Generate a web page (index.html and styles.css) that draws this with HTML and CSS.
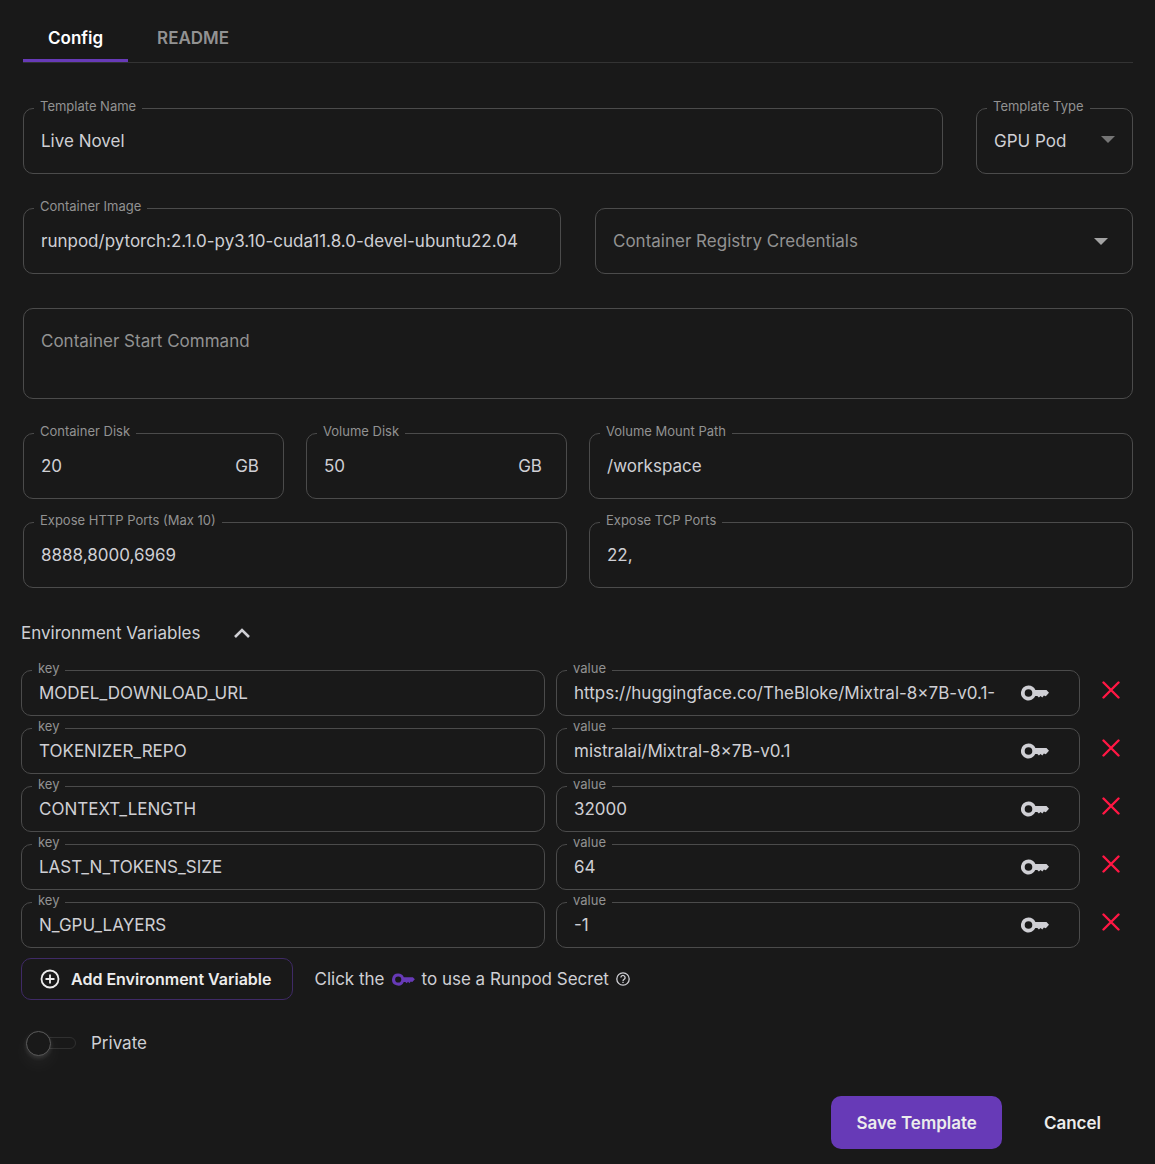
FILE: index.html
```html
<!DOCTYPE html>
<html lang="en">
<head>
<meta charset="utf-8">
<meta name="viewport" content="width=device-width, initial-scale=1">
<title>Template</title>
<link rel="stylesheet" href="styles.css">
</head>
<body>
<svg class="defs" aria-hidden="true">
  <symbol id="key" viewBox="0 0 28 16">
    <path fill="currentColor" fill-rule="evenodd" d="M7.500 0.500a7.500 7.500 0 0 1 6.900 4.600H25.500L28 7.800 24.800 11.200 22.900 10.600 21.300 12.500 19.600 10.900 17.900 12.500 16.300 11H14.300A7.500 7.500 0 1 1 7.500 0.500ZM7.500 4.200a3.800 3.800 0 1 0 0 7.600 3.800 3.800 0 0 0 0-7.600Z"/>
  </symbol>
  <symbol id="cross" viewBox="0 0 18 18">
    <path fill="none" stroke="currentColor" stroke-width="2.400" stroke-linecap="round" d="M1.500 1.500l15 15M16.500 1.500l-15 15"/>
  </symbol>
</svg>
<form class="page">
  <nav class="tabs">
    <button type="button" class="tab tab-active">Config</button>
    <button type="button" class="tab">README</button>
  </nav>

  <div class="rows">
    <div class="row row-name">
      <div class="field">
        <label class="label" for="name">Template Name</label>
        <input class="input" id="name" value="Live Novel">
      </div>
      <div class="field">
        <label class="label" for="type">Template Type</label>
        <select class="input" id="type"><option>GPU Pod</option></select>
        <svg class="arrow arrow-dim" viewBox="0 0 14 7"><path fill="currentColor" d="M0 0h14L7 7z"/></svg>
      </div>
    </div>
    <div class="row row-half">
      <div class="field">
        <label class="label" for="image">Container Image</label>
        <input class="input" id="image" value="runpod/pytorch:2.1.0-py3.10-cuda11.8.0-devel-ubuntu22.04">
      </div>
      <div class="field field-registry">
        <select class="input empty" aria-label="Container Registry Credentials"><option>Container Registry Credentials</option></select>
        <svg class="arrow" viewBox="0 0 14 7"><path fill="currentColor" d="M0 0h14L7 7z"/></svg>
      </div>
    </div>
    <div class="field field-tall">
      <textarea class="input" rows="1" aria-label="Container Start Command" placeholder="Container Start Command"></textarea>
    </div>
    <div class="quarters">
      <div class="field">
        <label class="label" for="cdisk">Container Disk</label>
        <input class="input" id="cdisk" value="20"><span class="unit">GB</span>
      </div>
      <div class="field">
        <label class="label" for="vdisk">Volume Disk</label>
        <input class="input" id="vdisk" value="50"><span class="unit">GB</span>
      </div>
      <div class="field wide">
        <label class="label" for="mount">Volume Mount Path</label>
        <input class="input" id="mount" value="/workspace">
      </div>
      <div class="field wide">
        <label class="label" for="http">Expose HTTP Ports (Max 10)</label>
        <input class="input" id="http" value="8888,8000,6969">
      </div>
      <div class="field wide">
        <label class="label" for="tcp">Expose TCP Ports</label>
        <input class="input" id="tcp" value="22,">
      </div>
    </div>
  </div>

  <section class="env">
    <div class="env-head">
      <span>Environment Variables</span>
      <button type="button" class="icon-btn" aria-label="Collapse"><svg class="chevron" viewBox="0 0 16 10"><path fill="none" stroke="currentColor" stroke-width="2.600" d="M1 9l7-7 7 7"/></svg></button>
    </div>
    <div class="env-rows">
      <div class="env-row">
        <div class="field small"><label class="label" for="k1">key</label><input class="input" id="k1" value="MODEL_DOWNLOAD_URL"></div>
        <div class="field small"><label class="label" for="v1">value</label><input class="input" id="v1" value="https://huggingface.co/TheBloke/Mixtral-8x7B-v0.1-"><button type="button" class="icon-btn" aria-label="Use secret"><svg class="key"><use href="#key"/></svg></button></div>
        <button type="button" class="icon-btn remove" aria-label="Remove"><svg class="cross"><use href="#cross"/></svg></button>
      </div>
      <div class="env-row">
        <div class="field small"><label class="label" for="k2">key</label><input class="input" id="k2" value="TOKENIZER_REPO"></div>
        <div class="field small"><label class="label" for="v2">value</label><input class="input" id="v2" value="mistralai/Mixtral-8x7B-v0.1"><button type="button" class="icon-btn" aria-label="Use secret"><svg class="key"><use href="#key"/></svg></button></div>
        <button type="button" class="icon-btn remove" aria-label="Remove"><svg class="cross"><use href="#cross"/></svg></button>
      </div>
      <div class="env-row">
        <div class="field small"><label class="label" for="k3">key</label><input class="input" id="k3" value="CONTEXT_LENGTH"></div>
        <div class="field small"><label class="label" for="v3">value</label><input class="input" id="v3" value="32000"><button type="button" class="icon-btn" aria-label="Use secret"><svg class="key"><use href="#key"/></svg></button></div>
        <button type="button" class="icon-btn remove" aria-label="Remove"><svg class="cross"><use href="#cross"/></svg></button>
      </div>
      <div class="env-row">
        <div class="field small"><label class="label" for="k4">key</label><input class="input" id="k4" value="LAST_N_TOKENS_SIZE"></div>
        <div class="field small"><label class="label" for="v4">value</label><input class="input" id="v4" value="64"><button type="button" class="icon-btn" aria-label="Use secret"><svg class="key"><use href="#key"/></svg></button></div>
        <button type="button" class="icon-btn remove" aria-label="Remove"><svg class="cross"><use href="#cross"/></svg></button>
      </div>
      <div class="env-row">
        <div class="field small"><label class="label" for="k5">key</label><input class="input" id="k5" value="N_GPU_LAYERS"></div>
        <div class="field small"><label class="label" for="v5">value</label><input class="input" id="v5" value="-1"><button type="button" class="icon-btn" aria-label="Use secret"><svg class="key"><use href="#key"/></svg></button></div>
        <button type="button" class="icon-btn remove" aria-label="Remove"><svg class="cross"><use href="#cross"/></svg></button>
      </div>
    </div>
    <div class="env-foot">
      <button type="button" class="add">
        <svg class="plus" viewBox="0 0 20 20"><g fill="none" stroke="currentColor" stroke-width="1.800"><circle cx="10" cy="10" r="8.500"/><path d="M10 5.500v9M5.500 10h9"/></g></svg>
        Add Environment Variable
      </button>
      <p class="hint">Click the <svg class="key key-hint"><use href="#key"/></svg> to use a Runpod Secret
        <svg class="help" viewBox="0 0 14 14"><g fill="none" stroke="currentColor" stroke-width="1.300"><circle cx="7" cy="7" r="6.200"/><path d="M4.900 5.600a2.100 2.100 0 1 1 3.300 1.700C7.400 7.900 7 8.200 7 9M7 9.800v1.300"/></g></svg>
      </p>
    </div>
    <label class="private"><input type="checkbox" class="switch" role="switch">Private</label>
  </section>

  <div class="actions">
    <button type="submit" class="btn btn-primary">Save Template</button>
    <button type="button" class="btn">Cancel</button>
  </div>
</form>
</body>
</html>
```
FILE: styles.css
```css
* { box-sizing: border-box; }
body {
  margin: 0;
  background: #191919;
  color: #cfcfd4;
  font: 17px/24px Inter, sans-serif;
}
button, input, select, textarea { font: inherit; color: inherit; }
button { background: none; border: 0; padding: 0; cursor: pointer; }
svg { display: block; flex: none; }
.defs { position: absolute; width: 0; height: 0; }
.page { padding: 14px 22px 15px 23px; }

.tabs {
  display: flex;
  gap: 4px;
  height: 49px;
  border-bottom: 1px solid #333;
}
.tab {
  height: 48px;
  padding: 3px 25px 0;
  border-bottom: 3px solid transparent;
  color: #929292;
  font-weight: 600;
}
.tab-active { color: #fff; border-color: #673ab7; }

.rows {
  display: flex;
  flex-direction: column;
  gap: 34px;
  margin-top: 45px;
}
.row { display: grid; gap: 34px; }
.row-name { grid-template-columns: 1fr 157px; column-gap: 33px; }
.row-half { grid-template-columns: 1fr 1fr; }
.quarters {
  display: grid;
  grid-template-columns: repeat(4, 1fr);
  gap: 23px 22px;
}
.wide { grid-column: span 2; }

.field {
  position: relative;
  display: flex;
  align-items: center;
  min-width: 0;
  height: 66px;
  padding: 0 17px;
  border: 1px solid #4b4b4b;
  border-radius: 10px;
}
.label {
  position: absolute;
  top: -12px;
  left: 10px;
  padding: 0 6px;
  background: #191919;
  color: #929292;
  font-size: 13px;
  line-height: 18px;
}
.input {
  flex: 1;
  min-width: 0;
  height: 24px;
  padding: 0;
  border: 0;
  outline: 0;
  background: none;
  appearance: none;
  resize: none;
}
.input::placeholder { color: #929292; opacity: 1; }
.empty { color: #929292; }
.field-registry { padding-right: 24px; }
.field-tall { height: 91px; align-items: flex-start; padding-top: 20px; }
.arrow { width: 14px; height: 7px; color: #a3a3a3; pointer-events: none; }
.arrow-dim { margin-bottom: 4px; color: #757575; }
.unit { margin-right: 7px; }

.env { margin: 33px 2px 0 -2px; }
.env-head { display: flex; align-items: center; gap: 34px; margin-bottom: 25px; }
.chevron { width: 16px; height: 10px; }
.env-rows { display: flex; flex-direction: column; gap: 12px; }
.env-row {
  display: grid;
  grid-template-columns: 1fr 1fr 40px;
  column-gap: 11px;
}
.small { height: 46px; padding-right: 30px; }
.small .input { margin-right: 14px; }
.key { width: 28px; height: 16px; }
.remove { display: flex; align-items: center; justify-content: center; height: 40px; color: #ff1744; }
.cross { width: 18px; height: 18px; }

.env-foot { display: flex; align-items: center; gap: 22px; margin-top: 10px; }
.add {
  display: flex;
  align-items: center;
  gap: 11px;
  height: 42px;
  padding: 0 20px 0 18px;
  border: 1px solid #3f2a66;
  border-radius: 10px;
  color: #ececec;
  font-size: 16px;
  font-weight: 600;
}
.plus { width: 20px; height: 20px; }
.hint { display: flex; align-items: center; gap: 7px; margin: 0; }
.key-hint { width: 23px; height: 13px; color: #673ab7; }
.help { width: 14px; height: 14px; }

.private { display: flex; align-items: center; gap: 15px; width: fit-content; margin: 31px 0 0 5px; }
.switch {
  display: flex;
  align-items: center;
  appearance: none;
  width: 50px;
  height: 12px;
  margin: 0;
  border: 1px solid #303030;
  border-radius: 6px;
}
.switch::before {
  content: "";
  box-sizing: border-box;
  flex: none;
  width: 25px;
  height: 25px;
  margin-left: -1px;
  border: 1px solid #5a5a5a;
  border-radius: 50%;
  background: #191919;
  box-shadow: 0 2px 4px rgba(255, 255, 255, .12), 0 8px 20px rgba(255, 255, 255, .06);
}

.actions { display: flex; justify-content: flex-end; gap: 10px; margin-top: 41px; }
.btn { height: 53px; padding: 0 32px; border-radius: 10px; color: #ececec; font-weight: 600; }
.btn-primary { padding: 0 25px; background: #673ab7; }
```
